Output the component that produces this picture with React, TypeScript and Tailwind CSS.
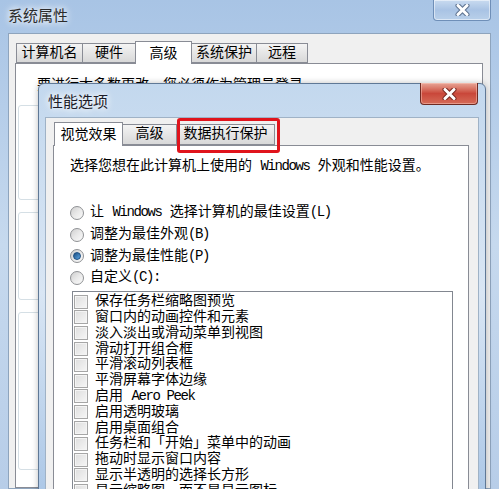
import React from "react";

const F = "font-['Liberation_Mono','Noto_Sans_CJK_SC',monospace]";

// Latin text in the dialog is half-width, so squeeze the mono glyphs a bit
function L({ children }: { children: React.ReactNode }) {
  return <span className="tracking-[-1.4px]">{children}</span>;
}

function CloseX({ edge }: { edge: string }) {
  return (
    <svg width="15" height="12" viewBox="0 0 15 12">
      <path d="M3 1.5 L12 10.5 M12 1.5 L3 10.5" stroke={edge} strokeWidth="5" strokeLinecap="round" />
      <path d="M3 1.5 L12 10.5 M12 1.5 L3 10.5" stroke="#ffffff" strokeWidth="3" strokeLinecap="round" />
    </svg>
  );
}

function Radio({ checked = false }: { checked?: boolean }) {
  return (
    <span className="flex h-[14px] w-[14px] shrink-0 items-center justify-center rounded-full border border-[#8f9194] bg-gradient-to-br from-[#cfcfcf] via-[#e9e9e9] to-[#fbfbfb]">
      {checked && (
        <span className="h-[8px] w-[8px] rounded-full border border-[#1d4f82] bg-gradient-to-br from-[#1a4d80] to-[#5ea8e6]" />
      )}
    </span>
  );
}

function Check() {
  return (
    <span className="h-[14px] w-[14px] shrink-0 border border-[#a6a6a6] bg-gradient-to-br from-[#dedede] to-[#f6f6f6] shadow-[inset_0_0_0_1px_#f4f4f4]" />
  );
}

const effects: React.ReactNode[] = [
  "保存任务栏缩略图预览",
  "窗口内的动画控件和元素",
  "淡入淡出或滑动菜单到视图",
  "滑动打开组合框",
  "平滑滚动列表框",
  "平滑屏幕字体边缘",
  <>
    启用 <L>Aero Peek</L>
  </>,
  "启用透明玻璃",
  "启用桌面组合",
  "任务栏和「开始」菜单中的动画",
  "拖动时显示窗口内容",
  "显示半透明的选择长方形",
  "显示缩略图，而不是显示图标",
];

export default function App() {
  return (
    <div
      className={`relative flex h-[489px] w-[499px] flex-col overflow-hidden bg-gradient-to-b from-[#a8c4e5] via-[#c6d9ee] to-[#b7cde8] text-[14px] text-black ${F}`}
    >
      {/* 系统属性 (back window) */}
      <div className="flex h-[33px] shrink-0 items-start justify-between pl-[8px] pr-[8px]">
        <span className="mt-[7px] font-['Noto_Sans_CJK_SC',sans-serif] text-[15px] leading-[16px] text-[#2c2c2c] [text-shadow:0_0_6px_#fff,0_0_10px_#fff]">
          系统属性
        </span>
        <div className="flex h-[21px] w-[58px] items-center justify-center rounded-b-[4px] border border-t-0 border-[#6f8fb8] bg-gradient-to-b from-[#c9dbf0] via-[#a9c3e4] to-[#b9d0ea] shadow-[inset_0_0_0_1px_rgba(255,255,255,0.5)]">
          <CloseX edge="#5d7290" />
        </div>
      </div>

      <div className="ml-[8px] mr-[8px] flex flex-1 flex-col border border-[#8ea4bd] bg-[#f0f0f0] pt-[7px]">
        <div className="flex items-end pl-[7px]">
          <div className="flex h-[20px] w-[67px] items-center justify-center border border-[#898c95] bg-gradient-to-b from-[#f4f4f4] to-[#d8d8d8]">
            计算机名
          </div>
          <div className="-ml-px flex h-[20px] w-[54px] items-center justify-center border border-[#898c95] bg-gradient-to-b from-[#f4f4f4] to-[#d8d8d8]">
            硬件
          </div>
          <div className="relative z-10 -mb-px -ml-px flex h-[23px] w-[57px] items-start justify-center border border-b-0 border-[#898c95] bg-white pt-[2px]">
            高级
          </div>
          <div className="-ml-px flex h-[20px] w-[66px] items-center justify-center border border-[#898c95] bg-gradient-to-b from-[#f4f4f4] to-[#d8d8d8]">
            系统保护
          </div>
          <div className="-ml-px flex h-[20px] w-[52px] items-center justify-center border border-[#898c95] bg-gradient-to-b from-[#f4f4f4] to-[#d8d8d8]">
            远程
          </div>
        </div>
        <div className="ml-[6px] flex w-[468px] flex-1 flex-col border border-[#898c95] bg-white">
          <p className="pl-[21px] pt-[13px] leading-[16px]">要进行大多数更改，您必须作为管理员登录。</p>
          <div className="ml-[2px] mr-[6px] mt-[12px] h-[95px] rounded-[3px] border border-[#d5dfe5]" />
          <div className="ml-[2px] mr-[6px] mt-[12px] h-[88px] rounded-[3px] border border-[#d5dfe5]" />
          <div className="ml-[2px] mr-[6px] mt-[12px] h-[158px] rounded-[3px] border border-[#d5dfe5]" />
        </div>
      </div>

      {/* 性能选项 (front dialog) */}
      <div className="absolute left-[38px] top-[83px] flex h-[420px] w-[448px] flex-col rounded-t-[6px] border border-[#5f7896] bg-gradient-to-b from-[#c3d8ee] via-[#d9e6f4] to-[#aac6e6] px-[6px] shadow-[0_0_6px_rgba(0,0,0,0.25)]">
        <div className="-mx-[6px] flex h-[33px] shrink-0 items-start justify-between pl-[9px] pr-[7px]">
          <span className="mt-[9px] font-['Noto_Sans_CJK_SC',sans-serif] text-[15px] leading-[16px] text-[#1c1c28] [text-shadow:0_0_6px_#fff,0_0_10px_#fff]">
            性能选项
          </span>
          <div className="-mt-px flex h-[22px] w-[58px] items-center justify-center rounded-b-[4px] border border-t-0 border-[#6e2a22] bg-gradient-to-b from-[#e7a597] via-[#c9473a] to-[#d56b58] shadow-[inset_0_0_0_1px_rgba(255,210,200,0.45)]">
            <CloseX edge="#7a2a22" />
          </div>
        </div>

        <div className="flex flex-1 flex-col border border-[#9fb2c6] bg-[#f0f0f0] pt-[4px]">
          <div className="flex items-end pl-[8px]">
            <div className="relative z-10 -mb-px flex h-[24px] w-[69px] items-start justify-center border border-b-0 border-[#898c95] bg-white pt-[2px]">
              视觉效果
            </div>
            <div className="-ml-px flex h-[21px] w-[55px] items-center justify-center border border-[#898c95] bg-gradient-to-b from-[#f4f4f4] to-[#d8d8d8]">
              高级
            </div>
            <div className="-ml-px flex h-[21px] w-[99px] items-center justify-center border border-[#898c95] bg-gradient-to-b from-[#f4f4f4] to-[#d8d8d8]">
              数据执行保护
            </div>
          </div>
          <div className="ml-[7px] flex w-[416px] flex-1 flex-col border border-[#898c95] bg-white pl-[16px] pt-[12px]">
            <p className="leading-[16px]">
              选择您想在此计算机上使用的 <L>Windows</L> 外观和性能设置。
            </p>
            <div className="mt-[28px] flex flex-col">
              <label className="flex h-[21.7px] items-center gap-[6px]">
                <Radio />
                <span>
                  让 <L>Windows</L> 选择计算机的最佳设置<L>(L)</L>
                </span>
              </label>
              <label className="flex h-[21.7px] items-center gap-[6px]">
                <Radio />
                <span>
                  调整为最佳外观<L>(B)</L>
                </span>
              </label>
              <label className="flex h-[21.7px] items-center gap-[6px]">
                <Radio checked />
                <span>
                  调整为最佳性能<L>(P)</L>
                </span>
              </label>
              <label className="flex h-[21.7px] items-center gap-[6px]">
                <Radio />
                <span>
                  自定义<L>(C):</L>
                </span>
              </label>
            </div>
            <div className="ml-[2px] mt-[2px] flex w-[381px] flex-1 flex-col overflow-hidden border border-[#828790] bg-white pl-[1px] pt-[2px]">
              {effects.map((e, i) => (
                <div key={i} className="flex h-[15.8px] shrink-0 items-center gap-[7px] leading-[15px]">
                  <Check />
                  <span className="whitespace-nowrap">{e}</span>
                </div>
              ))}
            </div>
          </div>
        </div>
      </div>

      {/* red annotation round the 数据执行保护 tab */}
      <div className="pointer-events-none absolute left-[177px] top-[118px] h-[35px] w-[103px] rounded-[3px] border-[3px] border-[#e0141c]" />
    </div>
  );
}
